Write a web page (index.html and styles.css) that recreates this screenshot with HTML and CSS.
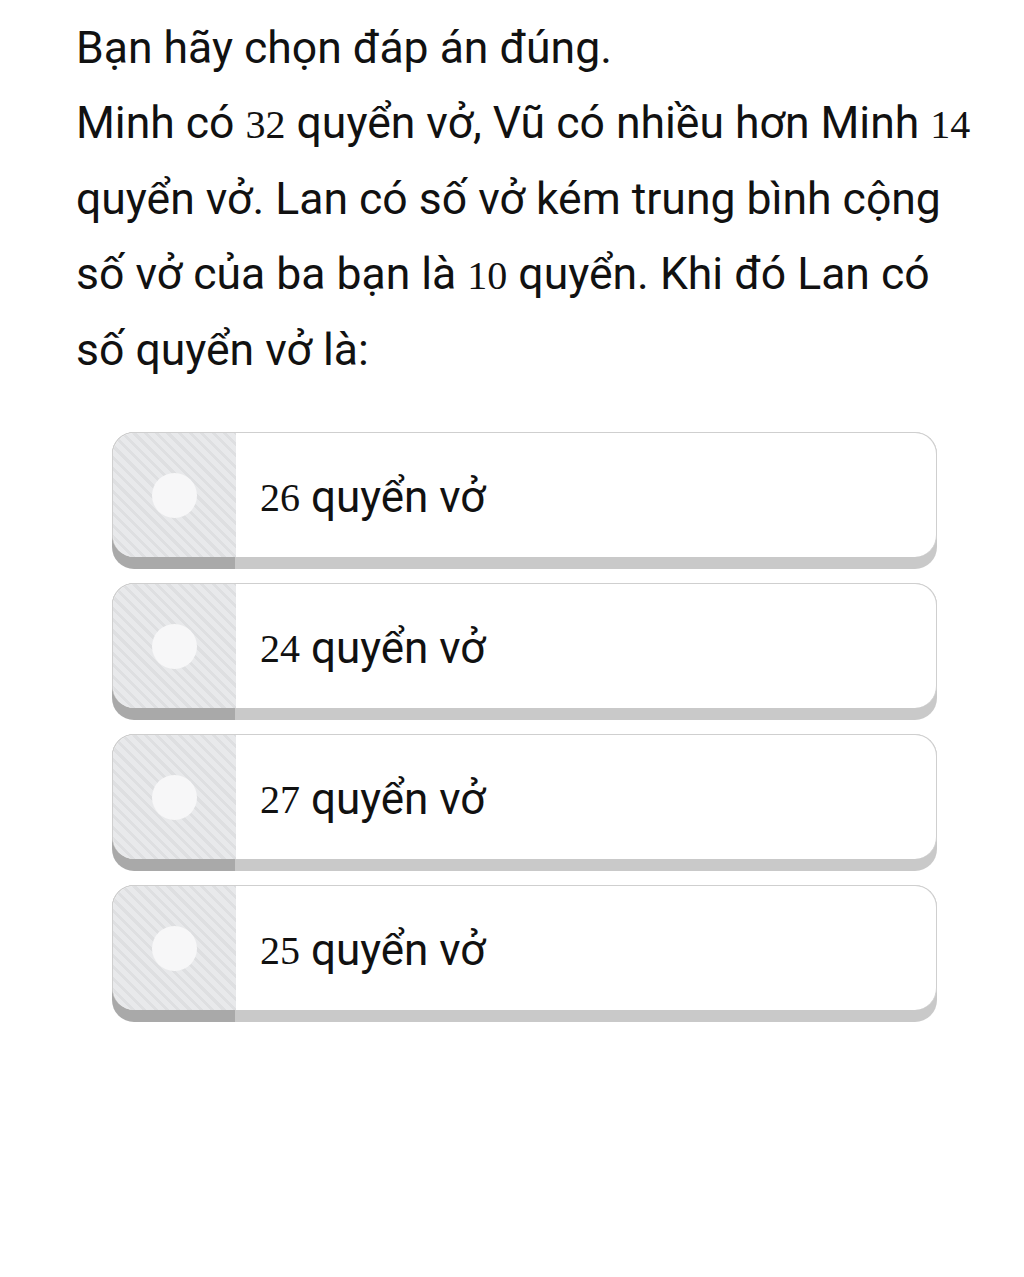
FILE: index.html
```html
<!DOCTYPE html>
<html lang="vi">
<head>
<meta charset="utf-8">
<link rel="stylesheet" href="styles.css">
</head>
<body>
<div class="page">
  <div class="question">
    <p class="line">Bạn hãy chọn đáp án đúng.</p>
    <p class="line">Minh có <span class="num">32</span> quyển vở, Vũ có nhiều hơn Minh <span class="num">14</span><br>quyển vở. Lan có số vở kém trung bình cộng<br>số vở của ba bạn là <span class="num">10</span> quyển. Khi đó Lan có<br>số quyển vở là:</p>
  </div>
  <div class="options">
    <div class="option"><div class="inner"><div class="side"><span class="dot"></span></div><div class="label"><span class="num">26</span> quyển vở</div></div></div>
    <div class="option"><div class="inner"><div class="side"><span class="dot"></span></div><div class="label"><span class="num">24</span> quyển vở</div></div></div>
    <div class="option"><div class="inner"><div class="side"><span class="dot"></span></div><div class="label"><span class="num">27</span> quyển vở</div></div></div>
    <div class="option"><div class="inner"><div class="side"><span class="dot"></span></div><div class="label"><span class="num">25</span> quyển vở</div></div></div>
  </div>
</div>
</body>
</html>
```
FILE: styles.css
```css
html, body {
  margin: 0;
  padding: 0;
  background: #ffffff;
}
.page {
  width: 1024px;
  height: 1277px;
  font-family: Roboto, "Noto Sans", sans-serif;
  color: #111111;
}
.question {
  padding: 11px 0 0 76px;
  font-size: 44.5px;
  line-height: 75px;
  white-space: nowrap;
}
.line {
  margin: 0;
}
.num {
  font-family: "Liberation Serif", "DejaVu Serif", serif;
  font-size: 40px;
}
.options {
  margin: 44px 0 0 112px;
  width: 825px;
  display: flex;
  flex-direction: column;
  gap: 14px;
}
.option {
  border-radius: 22px;
  padding-bottom: 12px;
  background: linear-gradient(to right, #a9a9a9 123px, #c9c9c9 123px);
}
.inner {
  display: flex;
  height: 124px;
  border: 1px solid #cfcfcf;
  border-bottom: none;
  border-radius: 22px;
  overflow: hidden;
  background: #ffffff;
}
.side {
  width: 123px;
  flex: none;
  display: flex;
  align-items: center;
  justify-content: center;
  background: repeating-linear-gradient(45deg, #e8e9eb 0, #e8e9eb 5px, #dedfe1 5px, #dedfe1 8px);
}
.dot {
  width: 45px;
  height: 45px;
  border-radius: 50%;
  background: #f7f7f8;
}
.label {
  display: flex;
  align-items: center;
  padding: 4px 0 0 24px;
  font-size: 44px;
  white-space: pre;
}
```
